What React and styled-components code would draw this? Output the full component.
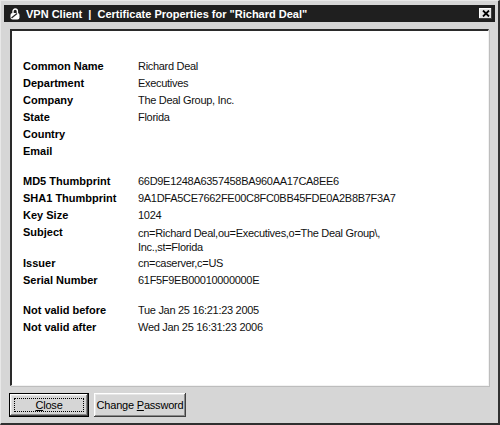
import React from "react";
import styled, { createGlobalStyle } from "styled-components";

const GlobalStyle = createGlobalStyle`
  html, body {
    margin: 0;
    padding: 0;
    background: #d6d6d6;
  }
  * {
    box-sizing: border-box;
  }
`;

const groups = [
  [
    { label: "Common Name", value: "Richard Deal" },
    { label: "Department", value: "Executives" },
    { label: "Company", value: "The Deal Group, Inc." },
    { label: "State", value: "Florida" },
    { label: "Country", value: "" },
    { label: "Email", value: "" }
  ],
  [
    { label: "MD5 Thumbprint", value: "66D9E1248A6357458BA960AA17CA8EE6" },
    { label: "SHA1 Thumbprint", value: "9A1DFA5CE7662FE00C8FC0BB45FDE0A2B8B7F3A7" },
    { label: "Key Size", value: "1024" },
    {
      label: "Subject",
      value: ["cn=Richard Deal,ou=Executives,o=The Deal Group\\,", "Inc.,st=Florida"]
    },
    { label: "Issuer", value: "cn=caserver,c=US" },
    { label: "Serial Number", value: "61F5F9EB00010000000E" }
  ],
  [
    { label: "Not valid before", value: "Tue Jan 25 16:21:23 2005" },
    { label: "Not valid after", value: "Wed Jan 25 16:31:23 2006" }
  ]
];

const AppIcon = () => (
  <svg width="10" height="12" viewBox="0 0 10 12">
    <path d="M3 5 V3.2 a2.2 2.2 0 0 1 4.4 0 V5" fill="none" stroke="#fff" strokeWidth="1.4" />
    <rect x="0.5" y="5" width="9" height="6.5" rx="2" fill="#fff" />
    <path d="M1.5 10 L7 5.5" stroke="#202020" strokeWidth="1.2" />
  </svg>
);

const CloseX = () => (
  <svg width="8" height="7" viewBox="0 0 8 7">
    <path d="M1 0.5 L7 6.5 M7 0.5 L1 6.5" stroke="#000" strokeWidth="1.8" />
  </svg>
);

const App = () => (
  <Window>
    <GlobalStyle />
    <TitleBar>
      <AppIcon />
      <Title>VPN Client&nbsp;&nbsp;|&nbsp;&nbsp;Certificate Properties for "Richard Deal"</Title>
      <TitleButton>
        <CloseX />
      </TitleButton>
    </TitleBar>
    <Body>
      <Panel>
        {groups.map((group, gi) => (
          <Group key={gi}>
            {group.map(row => (
              <React.Fragment key={row.label}>
                <Label>{row.label}</Label>
                {Array.isArray(row.value) ? (
                  <Value wrap>
                    {row.value[0]}
                    <br />
                    {row.value[1]}
                  </Value>
                ) : (
                  <Value>{row.value}</Value>
                )}
              </React.Fragment>
            ))}
          </Group>
        ))}
      </Panel>
      <ButtonRow>
        <Button primary>
          <Focus>
            <span>
              <u>C</u>lose
            </span>
          </Focus>
        </Button>
        <Button>
          <span>
            Change <u>P</u>assword
          </span>
        </Button>
      </ButtonRow>
    </Body>
  </Window>
);

export default App;

const Window = styled.div`
  width: 500px;
  height: 425px;
  display: flex;
  flex-direction: column;
  padding: 4px 3px 3px 3px;
  background: #d6d6d6;
  border-top: 1px solid #e8e8e8;
  border-left: 1px solid #e8e8e8;
  border-right: 2px solid #303030;
  border-bottom: 2px solid #303030;
  font-family: "Liberation Sans", Arial, sans-serif;
`;

const TitleBar = styled.div`
  height: 17px;
  display: flex;
  align-items: center;
  padding: 0 3px 0 6px;
  background: #1f1f1f;
  color: #fff;
`;

const Title = styled.span`
  flex: 1;
  margin-left: 6px;
  font-size: 11px;
  font-weight: bold;
  white-space: nowrap;
`;

const TitleButton = styled.span`
  width: 13px;
  height: 11px;
  display: flex;
  align-items: center;
  justify-content: center;
  background: #e4e4e4;
  box-shadow: inset -1px -1px #404040, inset 1px 1px #fff;
`;

const Body = styled.div`
  flex: 1;
  display: flex;
  flex-direction: column;
  padding: 7px 6px 0 5px;
`;

const Panel = styled.div`
  height: 357px;
  margin-left: 1px;
  padding: 27px 0 0 11px;
  background: #fff;
  border-top: 2px solid #2a2a2a;
  border-left: 2px solid #2a2a2a;
  border-right: 1px solid #f2f2f2;
  border-bottom: 1px solid #f2f2f2;
  box-shadow: 1px 1px 0 #bdbdbd;
`;

const Group = styled.div`
  display: grid;
  grid-template-columns: 115px 1fr;
  grid-auto-rows: minmax(17px, auto);
  margin-bottom: 13px;
`;

const Label = styled.div`
  font-size: 11px;
  font-weight: bold;
  line-height: 17px;
  color: #000;
  white-space: nowrap;
`;

const Value = styled.div`
  font-size: 11px;
  letter-spacing: -0.3px;
  line-height: ${props => (props.wrap ? "14px" : "17px")};
  padding: ${props => (props.wrap ? "1.5px 0" : "0")};
  color: #111;
  white-space: nowrap;
`;

const ButtonRow = styled.div`
  display: flex;
  gap: 5px;
  margin-top: 7px;
`;

const Button = styled.div`
  height: 24px;
  width: ${props => (props.primary ? "80px" : "92px")};
  display: flex;
  align-items: center;
  justify-content: center;
  padding: ${props => (props.primary ? "4px" : "0")};
  background: #d6d6d6;
  border: ${props => (props.primary ? "1px solid #000" : "none")};
  box-shadow: inset -1px -1px #404040, inset 1px 1px #fff, inset -2px -2px #8a8a8a,
    inset 2px 2px #e6e6e6;
  font-size: 11px;
  letter-spacing: -0.2px;
  color: #000;
  white-space: nowrap;
  u {
    text-decoration: underline;
  }
`;

const Focus = styled.span`
  flex: 1;
  align-self: stretch;
  display: flex;
  align-items: center;
  justify-content: center;
  border: 1px dotted #000;
`;
